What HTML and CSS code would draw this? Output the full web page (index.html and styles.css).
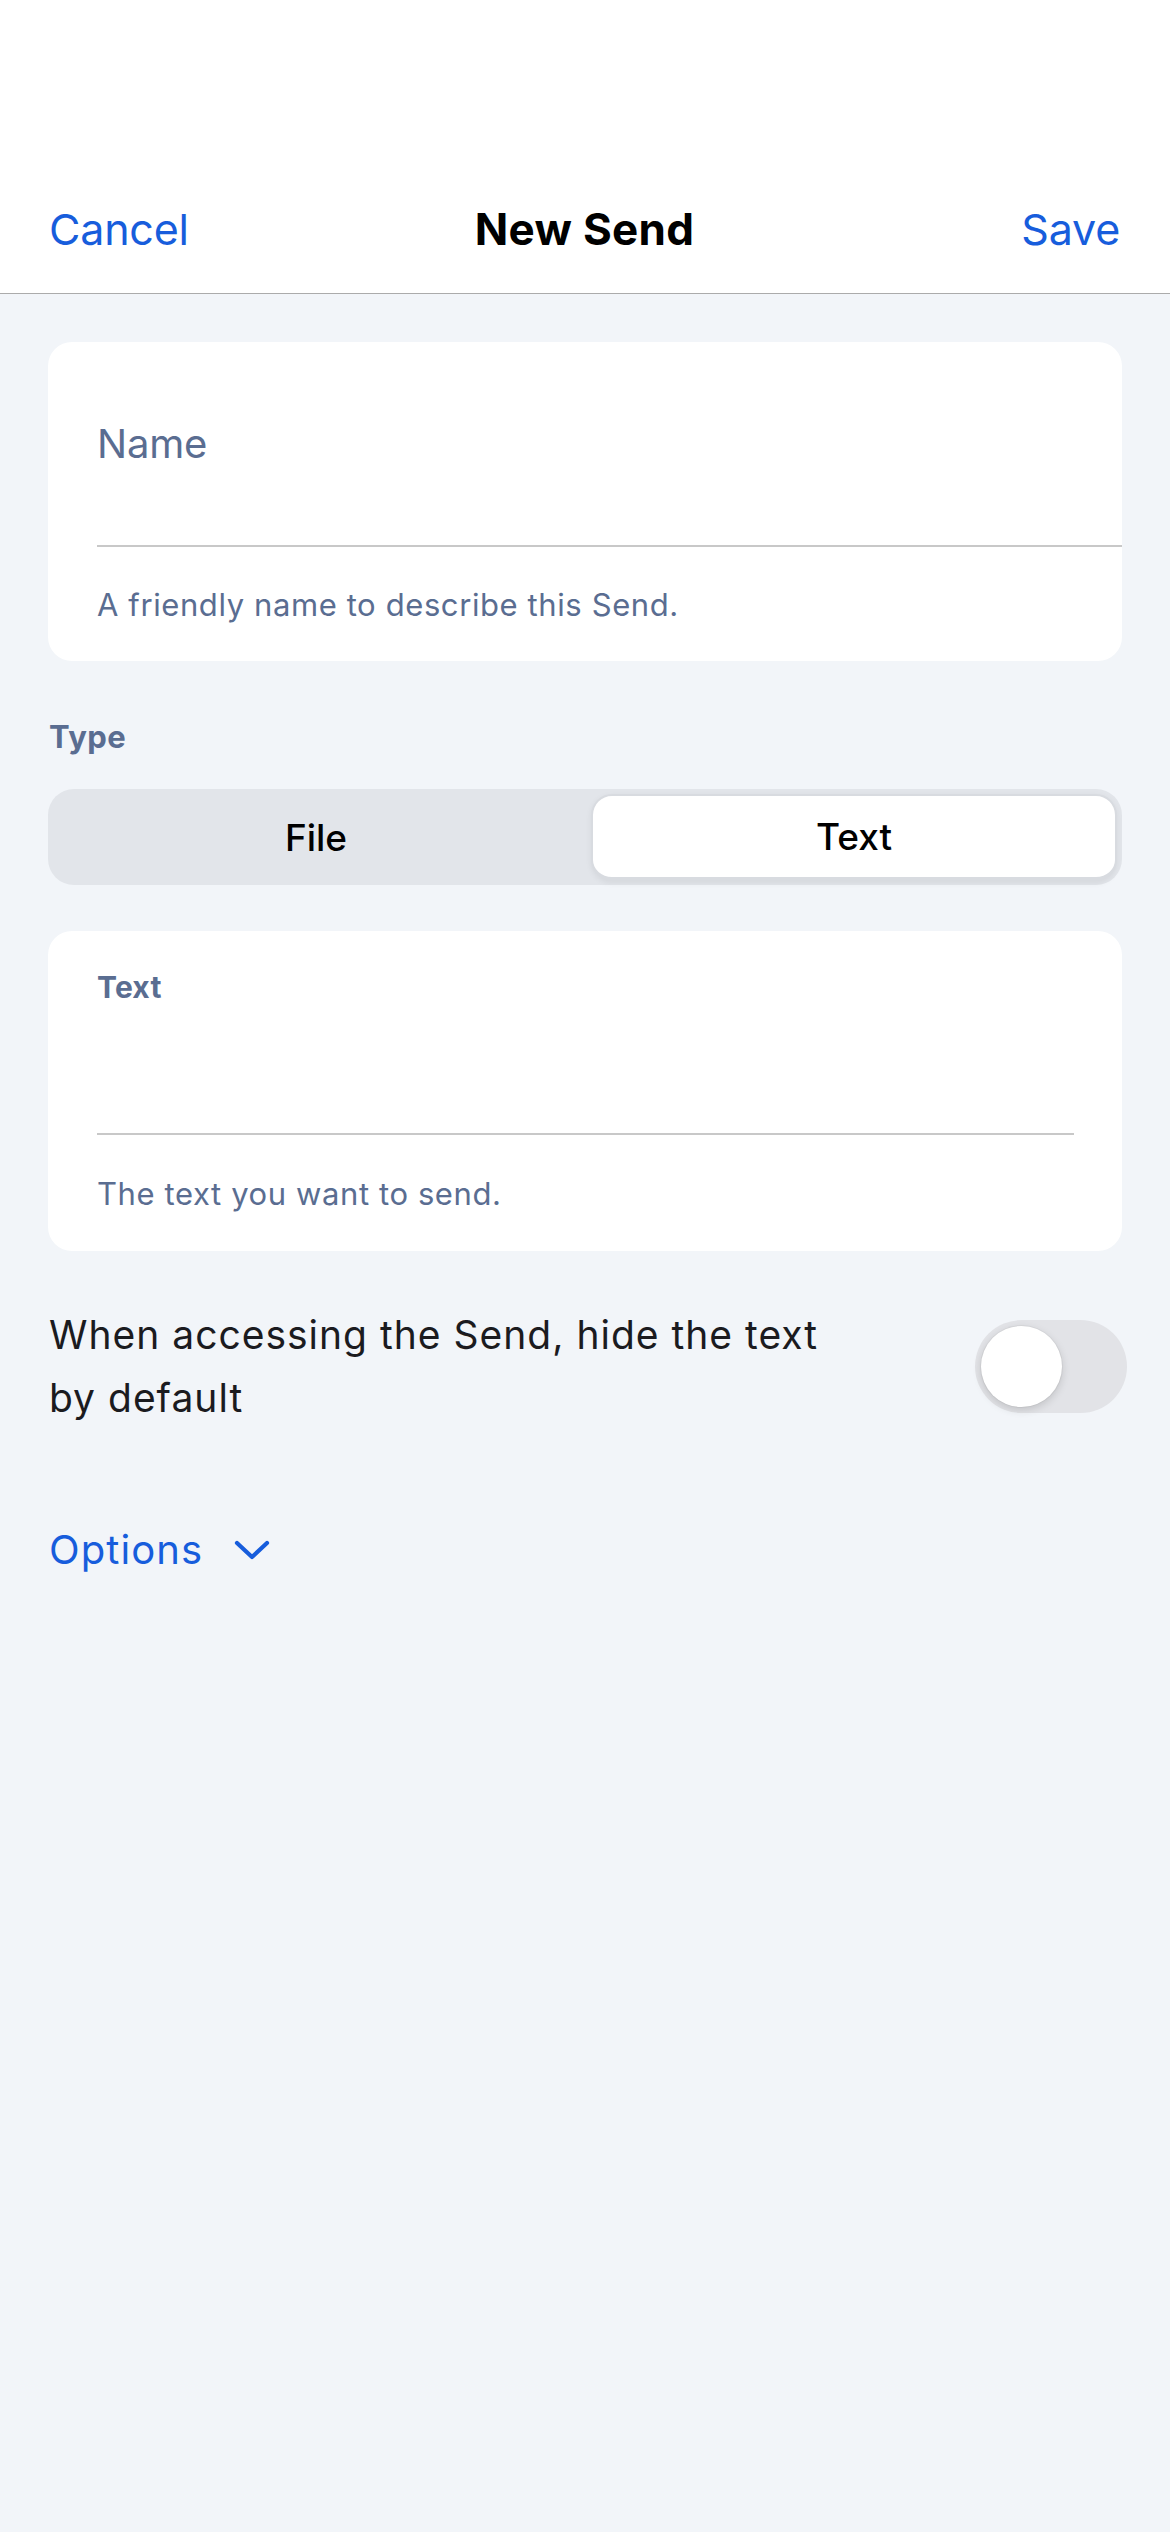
FILE: index.html
```html
<!DOCTYPE html>
<html lang="en">
<head>
<meta charset="utf-8">
<title>New Send</title>
<link rel="stylesheet" href="styles.css">
</head>
<body>
<header class="nav">
  <div class="nav-bar">
    <span class="nav-btn nav-left">Cancel</span>
    <span class="nav-title">New Send</span>
    <span class="nav-btn nav-right">Save</span>
  </div>
</header>
<main class="content">
  <section class="card card-name">
    <div class="field">
      <span class="placeholder">Name</span>
    </div>
    <div class="helper">A friendly name to describe this Send.</div>
  </section>

  <div class="section-label">Type</div>
  <div class="segmented">
    <div class="segment unselected">File</div>
    <div class="segment selected">Text</div>
  </div>

  <section class="card card-text">
    <div class="field-text">
      <span class="field-label">Text</span>
    </div>
    <div class="helper">The text you want to send.</div>
  </section>

  <div class="toggle-row">
    <div class="toggle-label">When accessing the Send, hide the text by default</div>
    <div class="toggle"><div class="knob"></div></div>
  </div>

  <div class="options">
    <span>Options</span>
    <svg class="chevron" width="36" height="22" viewBox="0 0 36 22" aria-hidden="true">
      <path d="M3 4 L18 18 L33 4" fill="none" stroke="#175ddc" stroke-width="4.2" stroke-linecap="round" stroke-linejoin="round"/>
    </svg>
  </div>
</main>
</body>
</html>
```

FILE: styles.css
```css
* { box-sizing: border-box; }
html, body {
  margin: 0;
  padding: 0;
}
body {
  width: 1170px;
  min-height: 2532px;
  background: #f2f5f9;
  font-family: Inter, "Noto Sans", sans-serif;
  color: #1b1b1f;
}
.nav {
  background: #ffffff;
  height: 294px;
  border-bottom: 1px solid #ababab;
  display: flex;
  flex-direction: column;
  justify-content: flex-end;
}
.nav-bar {
  height: 118px;
  padding: 0 50px 10px 49px;
  display: grid;
  grid-template-columns: 1fr auto 1fr;
  align-items: center;
}
.nav-btn {
  color: #175ddc;
  font-size: 43px;
  letter-spacing: -0.2px;
}
.nav-left { justify-self: start; }
.nav-right { justify-self: end; }
.nav-title {
  font-size: 44px;
  font-weight: 700;
  color: #000;
  letter-spacing: 0.3px;
}
.content {
  padding: 48px 48px 0 48px;
}
.card {
  background: #ffffff;
  border-radius: 24px;
}
.card-name {
  padding-left: 49px;
}
.field {
  height: 205px;
  border-bottom: 2px solid #c8c8c8;
  display: flex;
  align-items: center;
}
.placeholder {
  font-size: 40px;
  color: #5a6d91;
  letter-spacing: -0.2px;
}
.helper {
  height: 114px;
  display: flex;
  align-items: center;
  font-size: 31px;
  color: #5a6d91;
  letter-spacing: 0.6px;
}
.section-label {
  margin-top: 48px;
  height: 56px;
  line-height: 56px;
  padding-left: 1px;
  font-size: 31px;
  font-weight: 700;
  color: #5a6d91;
  letter-spacing: 0.4px;
}
.segmented {
  margin-top: 24px;
  height: 96px;
  background: #e2e5ea;
  border-radius: 26px;
  padding: 5px 5px 4px 5px;
  display: flex;
}
.segment {
  flex: 1;
  display: flex;
  align-items: center;
  justify-content: center;
  font-size: 37px;
  font-weight: 500;
  color: #000;
  border-radius: 21px;
}
.segment.unselected {
  padding-right: 12px;
}
.segment.selected {
  flex: 0 0 526px;
  background: #ffffff;
  border: 2px solid #d8dbe0;
  border-bottom-width: 4px;
  box-shadow: 0 2px 6px rgba(0,0,0,0.06);
}
.card-text {
  margin-top: 46px;
  padding: 0 48px 0 49px;
}
.field-text {
  height: 204px;
  border-bottom: 2px solid #c8c8c8;
  padding-top: 37px;
}
.field-label {
  display: block;
  font-size: 30px;
  font-weight: 700;
  color: #5a6d91;
  line-height: 38px;
  letter-spacing: 0.2px;
}
.card-text .helper {
  height: 116px;
}
.toggle-row {
  margin-top: 52px;
  display: flex;
  align-items: center;
  justify-content: space-between;
}
.toggle-label {
  width: 800px;
  font-size: 39px;
  line-height: 63px;
  color: #1b1b1f;
  letter-spacing: 1px;
  padding-left: 1px;
}
.toggle {
  width: 152px;
  height: 93px;
  border-radius: 47px;
  background: #e2e3e7;
  margin-right: -5px;
  padding: 6px;
  display: flex;
}
.knob {
  width: 81px;
  height: 81px;
  border-radius: 50%;
  background: #ffffff;
  box-shadow: 0 3px 8px rgba(0,0,0,0.15), 0 0 0 1px rgba(0,0,0,0.04);
}
.options {
  margin-top: 96px;
  display: flex;
  align-items: center;
  gap: 31px;
  color: #175ddc;
  font-size: 40px;
  line-height: 50px;
  letter-spacing: 1.1px;
  padding-left: 1px;
}
.chevron {
  margin-top: 0;
}
```
